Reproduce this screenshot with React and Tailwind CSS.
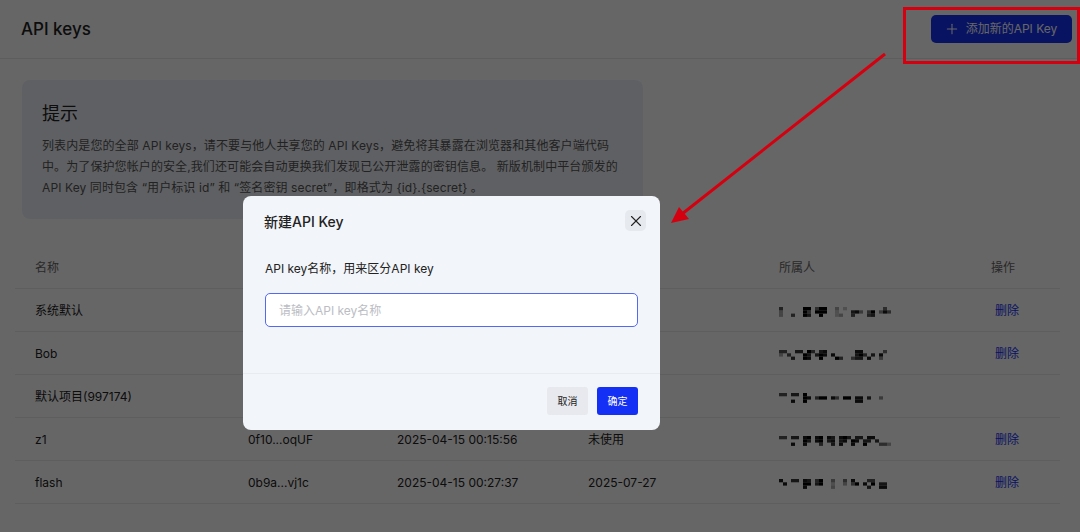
import React from "react";
import { Plus, X } from "lucide-react";

const rows = [
  {
    name: "系统默认",
    owner: ["6000009905990030200000000050", "3000009509990020007840590485", "3006009700900023006000670000"],
    del: true,
  },
  {
    name: "Bob",
    owner: ["6600770960780000000880000050", "3060009707980800000796070800", "0007009800900096005770800400"],
    del: true,
  },
  {
    name: "默认项目(997174)",
    owner: ["6607709000000000000000000000", "0000009806990850990880700400", "0008009000000000000880000000"],
    del: false,
  },
  {
    name: "z1",
    key: "0f10...oqUF",
    created: "2025-04-15 00:15:56",
    used: "未使用",
    owner: ["6607708908908708970770880000", "0000009708907807809807707000", "0008008000600708008009000553"],
    del: true,
  },
  {
    name: "flash",
    key: "0b9a...vj1c",
    created: "2025-04-15 00:27:37",
    used: "2025-07-27",
    owner: ["8007708706900400508000660000", "0800009907900200305908090770", "0000008000000300000000700880"],
    del: true,
  },
];

// pixelated e-mail addresses in the owner column
function Mosaic({ lines }) {
  return (
    <svg className="mt-[2px]" width="112" height="10" viewBox="0 0 112 10">
      {lines.map((line, y) =>
        line.split("").map((c, x) =>
          c === "0" ? null : (
            <rect key={x + "-" + y} x={x * 4} y={y * 3.3} width="4" height="3.3" fill="#000" opacity={Number(c) / 9} />
          )
        )
      )}
    </svg>
  );
}

const App = () => {
  return (
    <div
      className="relative h-[532px] w-[1080px] overflow-hidden bg-white text-[#222]"
      style={{ fontFamily: '"Inter", "Noto Sans CJK SC", sans-serif' }}
    >
      {/* Header */}
      <div className="flex h-[59px] items-center justify-between border-b border-[#e8e8e8] pl-[21px] pr-2">
        <h1 className="pt-[2px] text-[17px] font-medium">API keys</h1>
        <button className="flex h-[28px] w-[141px] items-center justify-center gap-[6px] rounded-[5px] bg-[#1530f5] pr-[2px] text-[12px] text-white">
          <Plus size={16} strokeWidth={1.6} />
          添加新的API Key
        </button>
      </div>

      {/* Notice */}
      <div className="ml-[22px] mt-[21px] h-[139px] w-[621px] rounded-lg bg-[#eef1f7] px-5 pt-[21px]">
        <h2 className="text-[18px] leading-[26px]">提示</h2>
        <p className="mt-[8px] text-[12px] leading-[21px] tracking-[0.1px] text-[#555]">
          列表内是您的全部 API keys，请不要与他人共享您的 API Keys，避免将其暴露在浏览器和其他客户端代码中。为了保护您帐户的安全,我们还可能会自动更换我们发现已公开泄露的密钥信息。 新版机制中平台颁发的 API Key 同时包含 “用户标识 id” 和 “签名密钥 secret”，即格式为 {"{id}.{secret}"} 。
        </p>
      </div>

      {/* Table */}
      <div className="ml-[15px] mt-[28px] w-[1045px] text-[12px]">
        <div className="flex h-[42px] items-center border-b border-[#ececec] text-[#666]">
          <div className="w-[233px] pl-5">名称</div>
          <div className="w-[149px]"></div>
          <div className="w-[191px]"></div>
          <div className="w-[191px]"></div>
          <div className="w-[212px]">所属人</div>
          <div>操作</div>
        </div>
        {rows.map((r) => (
          <div key={r.name} className="flex h-[43px] items-center border-b border-[#ececec] pt-[2px]">
            <div className="w-[233px] pl-5">{r.name}</div>
            <div className="w-[149px]">{r.key}</div>
            <div className="w-[191px]">{r.created}</div>
            <div className="w-[191px]">{r.used}</div>
            <div className="w-[216px]">
              <Mosaic lines={r.owner} />
            </div>
            {r.del && <div className="text-[#1530f5]">删除</div>}
          </div>
        ))}
      </div>

      {/* Modal */}
      <div className="absolute inset-0 bg-black/60 pl-[243px] pt-[196px]">
        <div className="h-[234px] w-[417px] rounded-lg bg-[#f2f5f9]">
          <div className="flex items-start justify-between pl-[21px] pr-[14px] pt-[14px]">
            <span className="pt-[1px] text-[14px] font-medium">新建API Key</span>
            <button className="flex h-[21px] w-[21px] items-center justify-center rounded-[5px] bg-[#e6e9ed]">
              <X size={18} strokeWidth={1.5} />
            </button>
          </div>
          <div className="mt-[28px] px-[22px] text-[12px] leading-[18px]">API key名称，用来区分API key</div>
          <div className="mx-[22px] mt-[15px]">
            <input
              placeholder="请输入API key名称"
              className="h-[34px] w-full rounded-[5px] border-[1.5px] border-[#5468f2] bg-white px-[13px] text-[12px] outline-none placeholder:text-[#bbbdc4]"
            />
          </div>
          <div className="mt-[46px] flex justify-end gap-[9px] border-t border-[#e8ebef] pr-[22px] pt-[13px]">
            <button className="h-[28px] w-[41px] rounded-[3px] bg-[#e8e9ee] text-[10px]">取消</button>
            <button className="h-[28px] w-[41px] rounded-[3px] bg-[#1530f5] text-[10px] text-white">确定</button>
          </div>
        </div>
      </div>

      {/* Red annotation */}
      <div className="absolute left-[903px] top-[7px] h-[57px] w-[177px] border-[3px] border-[#d5000f]" />
      <svg className="absolute inset-0" width="1080" height="532" viewBox="0 0 1080 532">
        <line x1="885" y1="54" x2="682" y2="214" stroke="#d5000f" strokeWidth="3" />
        <path d="M671 223 L679 207 L689 219 Z" fill="#d5000f" />
      </svg>
    </div>
  );
};

export default App;
